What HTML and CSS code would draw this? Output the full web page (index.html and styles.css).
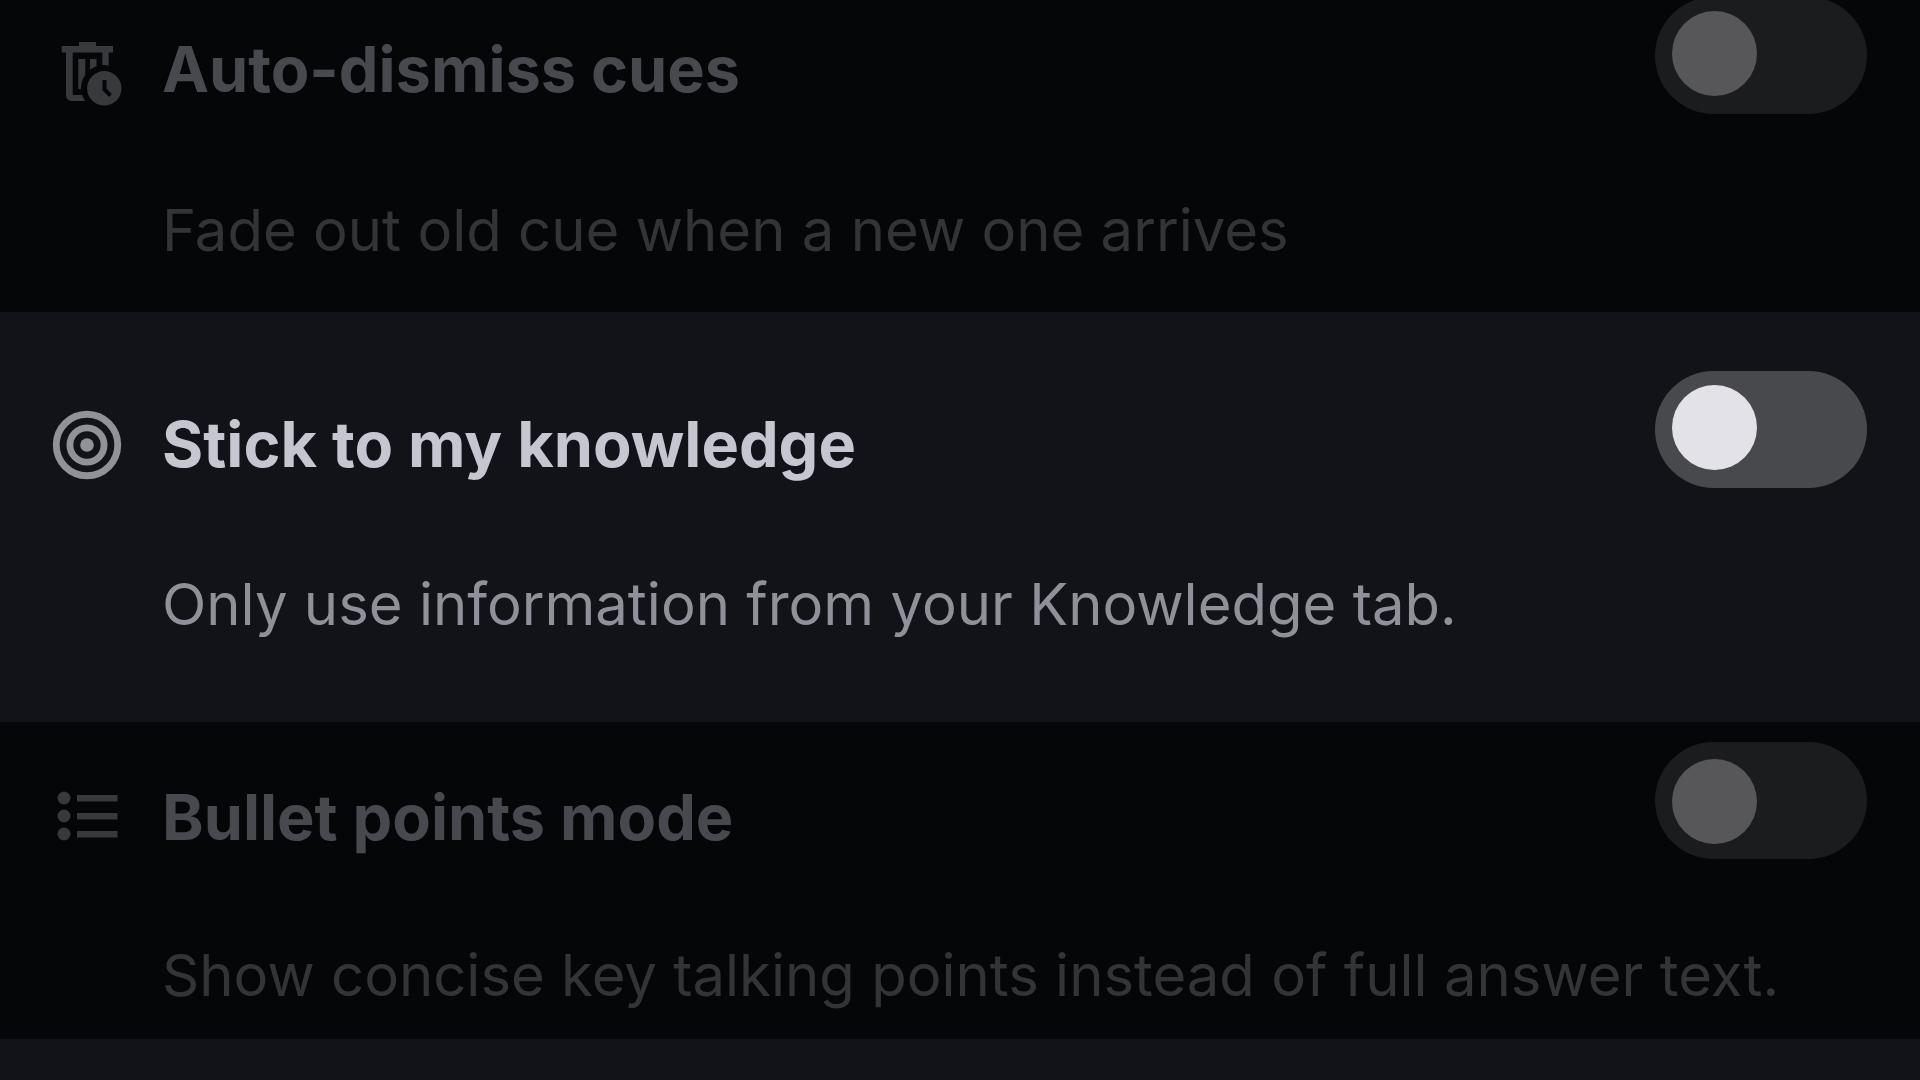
FILE: index.html
```html
<!DOCTYPE html>
<html lang="en">
<head>
  <meta charset="UTF-8" />
  <meta name="viewport" content="width=device-width, initial-scale=1.0" />
  <title>Cue settings</title>
  <link rel="stylesheet" href="styles.css">
</head>
<body>
  <main class="settings">
    <section class="setting dimmed">
      <svg class="icon" viewBox="0 0 82 82" aria-hidden="true">
        <mask id="clockGap">
          <rect width="82" height="82" fill="#fff" />
          <circle cx="58" cy="59" r="23" fill="#000" />
        </mask>
        <g mask="url(#clockGap)">
          <path d="M33 13h17v4h17v6.500h-4.300V42H56.300V23.500H26.700V66H45v6H26c-3.500 0-6-2.500-6-6V23.500h-4.300V17H33z" />
          <path d="M32.300 30h7v30h-7zM44 30h6.500v30H44z" />
        </g>
        <circle cx="58.300" cy="59.300" r="17.200" />
        <path class="hand" d="M58.500 51v9.500l6 6" />
      </svg>
      <h2><label for="autoDismiss">Auto-dismiss cues</label></h2>
      <input type="checkbox" class="toggle" id="autoDismiss" />
      <p>Fade out old cue when a new one arrives</p>
    </section>

    <section class="setting active">
      <svg class="icon" viewBox="0 0 24 24" aria-hidden="true">
        <circle class="ring" cx="12" cy="12" r="9" />
        <circle class="ring" cx="12" cy="12" r="5" />
        <circle cx="12" cy="12" r="2" />
      </svg>
      <h2><label for="knowledge">Stick to my knowledge</label></h2>
      <input type="checkbox" class="toggle" id="knowledge" />
      <p>Only use information from your Knowledge tab.</p>
    </section>

    <section class="setting dimmed compact">
      <svg class="icon" viewBox="0 0 82 82" aria-hidden="true">
        <circle cx="18" cy="21" r="6.500" />
        <circle cx="18" cy="39" r="6.500" />
        <circle cx="18" cy="57" r="6.500" />
        <path d="M31 18h40.500v6.500H31zM31 36h40.500v6.500H31zM31 54h40.500v6.500H31z" />
      </svg>
      <h2><label for="bulletPoints">Bullet points mode</label></h2>
      <input type="checkbox" class="toggle" id="bulletPoints" />
      <p>Show concise key talking points instead of full answer text.</p>
    </section>
  </main>
</body>
</html>
```
FILE: styles.css
```css
* {
  box-sizing: border-box;
  margin: 0;
  padding: 0;
}
body {
  background-color: #121318;
  font-family: Inter, sans-serif;
  overflow: hidden;
}
/* the panel is scrolled, so the first row starts above the window */
.settings {
  margin-top: -60px;
}
.setting {
  display: grid;
  grid-template-columns: 82px 1fr auto;
  column-gap: 34px;
  row-gap: 80px;
  align-items: start;
  padding: 57px 53px 46px 46px;
  color: #8f9099;
}
.icon {
  width: 82px;
  height: 82px;
  margin-top: 32px;
  fill: #909199;
}
.ring {
  fill: none;
  stroke: #909199;
  stroke-width: 2;
}
.hand {
  fill: none;
  stroke: #050608;
  stroke-width: 4;
}
.setting h2 {
  margin-top: 32px;
  font-size: 63px;
  line-height: 80px;
  font-weight: 650;
  color: #c5c6d0;
}
.setting p {
  grid-column: 2 / -1;
  font-size: 58px;
  line-height: 72px;
}
.toggle {
  appearance: none;
  position: relative;
  width: 212px;
  height: 117px;
  border-radius: 59px;
  background-color: #48494d;
  cursor: pointer;
}
.toggle::before {
  content: "";
  position: absolute;
  left: 17px;
  top: 14px;
  width: 85px;
  height: 85px;
  border-radius: 50%;
  background-color: #e3e2e9;
}
.toggle:checked::before {
  left: 110px;
}

.active {
  padding-top: 59px;
  padding-bottom: 82px;
}
.active h2,
.active .icon {
  margin-top: 33px;
}
.compact {
  padding-top: 20px;
  padding-bottom: 28px;
}
.compact h2,
.compact .icon {
  margin-top: 35px;
}
.compact .toggle::before {
  top: 17px;
}

.dimmed {
  background-color: #050608;
  color: #333438;
}
.dimmed .icon {
  fill: #38393d;
}
.dimmed h2 {
  color: #48494f;
}
.dimmed .toggle {
  background-color: #1b1c1e;
}
.dimmed .toggle::before {
  background-color: #575759;
}
```
